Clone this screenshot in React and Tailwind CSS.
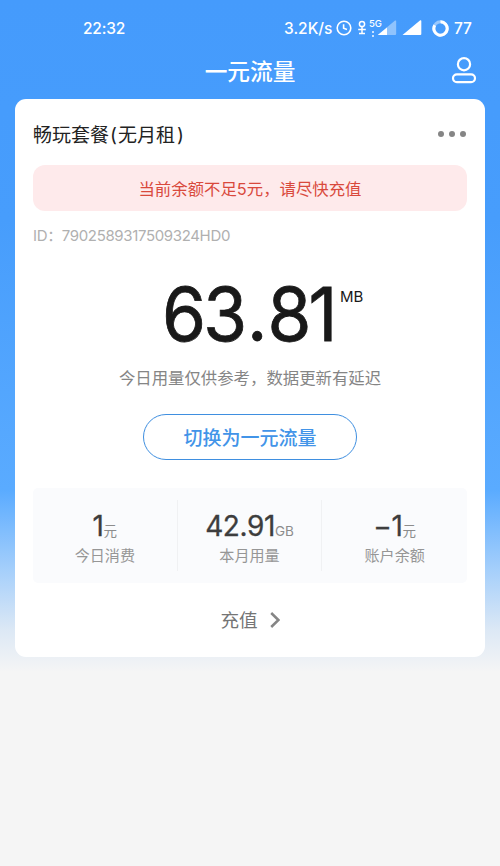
import React from 'react';

const stats = [
    { value: '1', unit: '元', label: '今日消费' },
    { value: '42.91', unit: 'GB', label: '本月用量' },
    { value: '−1', unit: '元', label: '账户余额' },
];

// --- STATUS BAR ICONS ---
function ClockIcon() {
    return (
        <svg width="16" height="16" viewBox="0 0 16 16" fill="none" stroke="currentColor" strokeWidth="1.6">
            <circle cx="8" cy="8" r="6.8" />
            <path d="M7.6 4.2V8.2L11 9.4" />
        </svg>
    );
}

function LinkIcon() {
    return (
        <svg width="8" height="16" viewBox="0 0 8 16" fill="none" stroke="currentColor" strokeWidth="1.5">
            <circle cx="4" cy="4" r="2.6" />
            <path d="M4 6.5V14M0.2 9.5H7.8M1 13.5H7" />
        </svg>
    );
}

function WeakSignalIcon() {
    return (
        <svg width="20" height="16" viewBox="0 0 20 16" fill="currentColor">
            <path d="M0.8 15L18 0.6Q19.2 0 19.2 1V14Q19.2 15 18 15Z" opacity="0.4" />
            <path d="M0.8 15L10 7.4V15Z" />
        </svg>
    );
}

function SignalIcon() {
    return (
        <svg width="20" height="16" viewBox="0 0 20 16" fill="currentColor">
            <path d="M0.5 15L18.2 0.3Q19.3 0 19.3 1V14Q19.3 15 18.3 15Z" />
        </svg>
    );
}

function BatteryRing() {
    return (
        <svg width="17" height="17" viewBox="0 0 17 17" fill="none" stroke="currentColor" strokeWidth="3">
            <circle cx="8.5" cy="8.5" r="6.7" opacity="0.45" />
            <path d="M8.5 1.8A6.7 6.7 0 1 1 2.7 5.2" />
        </svg>
    );
}

function UserIcon() {
    return (
        <svg width="26" height="28" viewBox="0 0 26 28" fill="none" stroke="currentColor" strokeWidth="2.2">
            <circle cx="13" cy="8.2" r="6.1" />
            <rect x="2" y="18.4" width="22" height="7.8" rx="3.9" />
        </svg>
    );
}

function StatusBar() {
    return (
        <div className="flex h-14 items-center pl-[83px] font-['Inter',sans-serif] text-[15.5px] font-medium">
            <span className="w-[201px] pt-px tracking-[-0.2px]">22:32</span>
            <span className="w-[52px] whitespace-nowrap pt-px">3.2K/s</span>
            <div className="flex"><ClockIcon /></div>
            <div className="ml-[6px] flex"><LinkIcon /></div>
            <div className="ml-[3px] flex h-[19px] w-[8px] flex-col">
                <span className="text-[9.5px] leading-[9px]">5G</span>
                <div className="ml-[3px] mt-[3px] flex flex-col gap-[2px] opacity-70">
                    <i className="h-[2px] w-[2px] bg-white" />
                    <i className="h-[2px] w-[2px] bg-white" />
                </div>
            </div>
            <div className="flex"><WeakSignalIcon /></div>
            <div className="ml-[5px] flex"><SignalIcon /></div>
            <div className="ml-[10px] flex"><BatteryRing /></div>
            <span className="ml-[5px] pt-px tracking-[-0.2px]">77</span>
        </div>
    );
}

export default function App() {
    return (
        <div className="h-[866px] w-[500px] overflow-hidden bg-[#f5f5f5] bg-[linear-gradient(180deg,#459bfc_0px,#479dfc_220px,#5aabff_490px,#a5cffb_570px,#dce8f5_630px,#f5f5f5_672px)] font-['Inter','Noto_Sans_CJK_SC',sans-serif] text-white">
            <StatusBar />

            {/* HEADER */}
            <header className="grid h-[43px] grid-cols-[1fr_auto_1fr] items-start px-[23px]">
                <span />
                <h1 className="pt-px text-[22.7px] font-medium leading-[30px]">一元流量</h1>
                <div className="flex justify-end"><UserIcon /></div>
            </header>

            {/* PLAN CARD */}
            <main className="mx-[15px] h-[558px] rounded-[11px] bg-white px-[18px] pt-[20px]">
                <div className="flex h-[30px] items-center justify-between">
                    <h2 className="pt-[3px] text-[19px] leading-[30px] text-[#222]">
                        畅玩套餐<span className="mx-[1px]">(</span>无月租<span className="ml-[2px]">)</span>
                    </h2>
                    <div className="flex gap-[5px] pr-[1px]">
                        <i className="h-[6px] w-[6px] rounded-full bg-[#858585]" />
                        <i className="h-[6px] w-[6px] rounded-full bg-[#858585]" />
                        <i className="h-[6px] w-[6px] rounded-full bg-[#858585]" />
                    </div>
                </div>

                <div className="mt-[16px] h-[46px] rounded-[12px] bg-[#feeaeb] pt-px text-center text-[16.4px] leading-[47px] text-[#d9493c]">
                    当前余额不足5元，请尽快充值
                </div>

                <p className="mt-[12px] h-[24px] text-[15px] leading-[25px] tracking-[-0.35px] text-[#b0b0b0]">ID：7902589317509324HD0</p>

                {/* today usage */}
                <div className="mt-[27px] flex h-[80px] items-start pl-[129px] text-[#191919]">
                    <span className="w-[178px] origin-left scale-x-[0.96] whitespace-nowrap text-[74px] leading-[80px] tracking-[-3px] [-webkit-text-stroke:0.8px_#191919]">
                        63<span className="mx-[3px]">.</span>81
                    </span>
                    <span className="mt-[13px] text-[15px] leading-[20px]">MB</span>
                </div>
                <p className="mt-[11px] h-[25px] text-center text-[16.4px] leading-[27px] text-[#858585]">今日用量仅供参考，数据更新有延迟</p>

                <button className="mx-auto mt-[24px] block h-[46px] w-[214px] rounded-full border border-[#3f8fe0] pt-px text-[19px] font-medium leading-[45px] text-[#4294e8]">
                    切换为一元流量
                </button>

                {/* totals */}
                <div className="mt-[28px] grid h-[95px] grid-cols-3 divide-x divide-[#f0f1f3] rounded-[5px] bg-[#fafbfd] py-[12px]">
                    {stats.map((item) => (
                        <div key={item.label} className="flex flex-col items-center">
                            <div className="flex h-[42px] items-baseline">
                                <span className="text-[28px] leading-[53px] tracking-[-0.4px] text-[#3d3d3d] [-webkit-text-stroke:0.3px_#3d3d3d]">{item.value}</span>
                                <span className="text-[13.5px] text-[#8c8c8c]">{item.unit}</span>
                            </div>
                            <span className="pt-px text-[15.1px] leading-[26px] text-[#969696]">{item.label}</span>
                        </div>
                    ))}
                </div>

                <div className="mt-[22px] flex h-[30px] items-center justify-center gap-[12px]">
                    <span className="text-[18.6px] leading-[30px] text-[#757575]">充值</span>
                    <svg width="10" height="16" viewBox="0 0 10 16" fill="none" stroke="#858585" strokeWidth="2.5">
                        <path d="M1.2 1L8.4 8L1.2 15" />
                    </svg>
                </div>
            </main>
        </div>
    );
}
